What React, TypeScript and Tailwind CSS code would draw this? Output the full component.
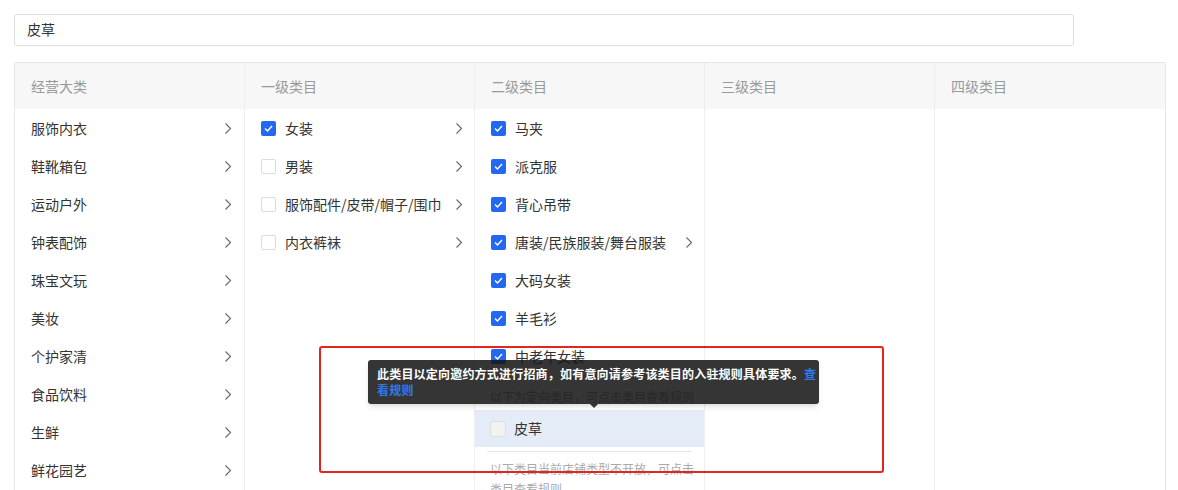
import React from "react";

const FONT = { fontFamily: '"Microsoft YaHei", "Noto Sans CJK SC", "Noto Sans", sans-serif' };

const majors = ["服饰内衣", "鞋靴箱包", "运动户外", "钟表配饰", "珠宝文玩", "美妆", "个护家清", "食品饮料", "生鲜", "鲜花园艺", "家居用品"];
const level1 = [
  { name: "女装", checked: true },
  { name: "男装", checked: false },
  { name: "服饰配件/皮带/帽子/围巾", checked: false },
  { name: "内衣裤袜", checked: false },
];
const level2 = [
  { name: "马夹", more: false },
  { name: "派克服", more: false },
  { name: "背心吊带", more: false },
  { name: "唐装/民族服装/舞台服装", more: true },
  { name: "大码女装", more: false },
  { name: "羊毛衫", more: false },
  { name: "中老年女装", more: false },
];

function Chevron() {
  return (
    <svg width="8" height="13" viewBox="0 0 8 13" className="shrink-0">
      <polyline points="1.5,1.5 6.5,6.5 1.5,11.5" fill="none" stroke="#666" strokeWidth="1.1" />
    </svg>
  );
}

function Check({ checked, disabled }: { checked: boolean; disabled?: boolean }) {
  if (checked) {
    return (
      <span className="w-[15px] h-[15px] rounded-[2px] bg-[#2468f2] flex items-center justify-center shrink-0">
        <svg width="11" height="11" viewBox="0 0 11 11">
          <polyline points="2,5.5 4.5,8 9,3" fill="none" stroke="#fff" strokeWidth="1.4" />
        </svg>
      </span>
    );
  }
  return (
    <span
      className={
        disabled
          ? "w-[16px] h-[16px] rounded-[3px] border border-[#dedede] bg-[#f2f2f2] shrink-0"
          : "w-[15px] h-[15px] rounded-[2px] border border-[#dcdcdc] bg-white shrink-0"
      }
    />
  );
}

const headers = ["经营大类", "一级类目", "二级类目", "三级类目", "四级类目"];

export default function App() {
  return (
    <div className="relative w-[1178px] h-[490px] overflow-hidden bg-white text-[#333]" style={FONT}>
      <div className="pt-[14px] pl-[14px]">
        <div className="w-[1060px] h-[32px] border border-[#dcdcdc] rounded-[3px] flex items-center pl-[12px] pb-px text-[14px]">
          皮草
        </div>
      </div>

      <div className="ml-[14px] mt-[16px] w-[1152px] border border-[#e6e6e6] rounded-[2px]">
        <div className="grid grid-cols-5 h-[46px] bg-[#f7f7f7]">
          {headers.map((h, i) => (
            <div
              key={h}
              className={
                i < 4
                  ? "flex items-center pl-[16px] text-[14px] text-[#999] border-r border-[#eeeeee]"
                  : "flex items-center pl-[16px] text-[14px] text-[#999]"
              }
            >
              {h}
            </div>
          ))}
        </div>

        <div className="grid grid-cols-5 h-[420px]">
          {/* 经营大类 */}
          <div className="border-r border-[#eeeeee]">
            {majors.map((m) => (
              <div key={m} className="h-[38px] flex items-center justify-between pl-[16px] pr-[12px] text-[14px]">
                <span>{m}</span>
                <Chevron />
              </div>
            ))}
          </div>

          {/* 一级类目 */}
          <div className="border-r border-[#eeeeee]">
            {level1.map((c) => (
              <div key={c.name} className="h-[38px] flex items-center justify-between pl-[16px] pr-[11px] text-[14px]">
                <span className="flex items-center gap-[9px]">
                  <Check checked={c.checked} />
                  <span>{c.name}</span>
                </span>
                <Chevron />
              </div>
            ))}
          </div>

          {/* 二级类目 */}
          <div className="border-r border-[#eeeeee]">
            {level2.map((c) => (
              <div key={c.name} className="h-[38px] flex items-center justify-between pl-[16px] pr-[11px] text-[14px]">
                <span className="flex items-center gap-[9px]">
                  <Check checked />
                  <span>{c.name}</span>
                </span>
                {c.more && <Chevron />}
              </div>
            ))}
            <div className="pl-[15px] pt-[12px] pb-[3px] leading-[20px] text-[12px] text-[#999]">
              以下为定向类目，可点击类目查看规则
            </div>
            <div className="h-[37px] bg-[#e4ecf8] flex items-center gap-[8px] pl-[15px] text-[14px]">
              <Check checked={false} disabled />
              <span>皮草</span>
            </div>
            <div className="mx-[12px] mt-[4px] h-px bg-[#e8e8e8]" />
            <div className="w-[222px] pl-[15px] pt-[7px] leading-[20px] text-[12px] text-[#aaa]">
              以下类目当前店铺类型不开放，可点击类目查看规则
            </div>
          </div>

          <div className="border-r border-[#eeeeee]" />
          <div />
        </div>
      </div>

      {/* tooltip */}
      <div className="absolute left-[368px] top-[360px] w-[451px] rounded-[3px] bg-[rgba(20,20,20,0.86)] px-[9px] py-[6px] text-[12px] leading-[16px] tracking-[0.2px] font-bold text-white whitespace-nowrap shadow-md">
        此类目以定向邀约方式进行招商，如有意向请参考该类目的入驻规则具体要求。
        <span className="text-[#2f7bf0]">
          查<br />看规则
        </span>
        <span className="absolute left-[222px] -bottom-[4px] w-0 h-0 border-l-[4px] border-r-[4px] border-t-[4px] border-l-transparent border-r-transparent border-t-[rgba(20,20,20,0.86)]" />
      </div>

      {/* annotation box */}
      <div className="absolute left-[319px] top-[346px] w-[565px] h-[127px] border-2 border-[#e0261f] rounded-[3px]" />
    </div>
  );
}
